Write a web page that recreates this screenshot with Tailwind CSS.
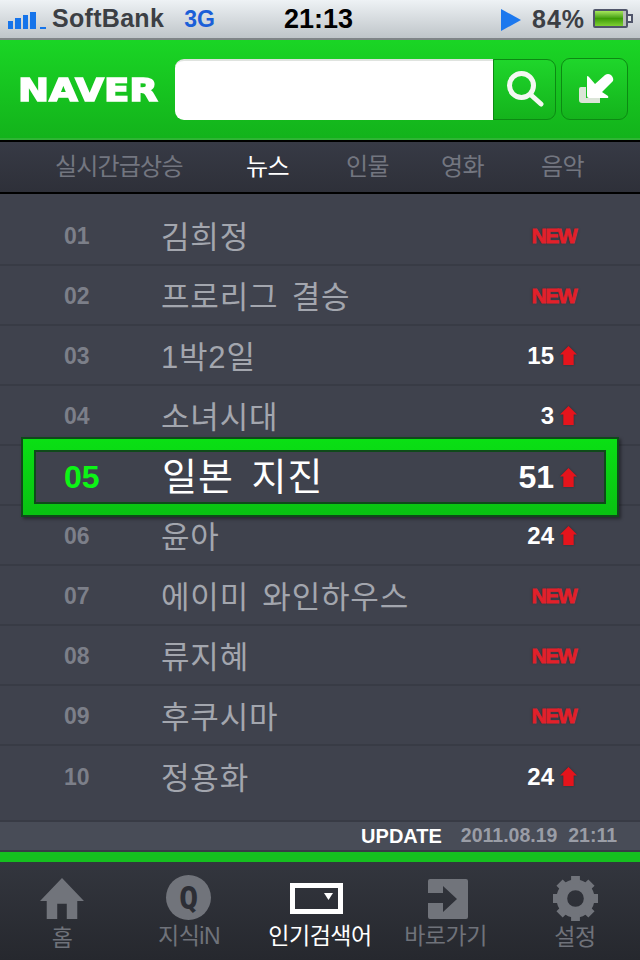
<!DOCTYPE html>
<html lang="ko">
<head>
<meta charset="UTF-8">
<title>NAVER 실시간급상승</title>
<script src="https://cdn.jsdelivr.net/npm/@tailwindcss/browser@4"></script>
</head>
<body class="w-[640px] h-[960px] overflow-hidden bg-[#3f424d] font-['Liberation_Sans','Noto_Sans_CJK_KR',sans-serif]">
<div class="relative w-[640px] h-[960px] flex flex-col">

  <!-- status bar -->
  <div class="h-[40px] shrink-0 flex items-center bg-gradient-to-b from-[#eef2f5] to-[#bfc5c9] border-b-2 border-[#7f8487] text-[#3c3f44] relative">
    <svg class="ml-2 mt-[3px] w-[39px] h-[20px]" viewBox="0 0 39 20"><g fill="#1674ea"><rect y="10" width="5" height="8"/><rect x="7" y="7" width="6" height="11"/><rect x="15" y="4" width="5" height="14"/><rect x="22" y="1" width="6" height="17"/><rect x="32" y="16" width="6" height="2"/></g></svg>
    <span class="ml-[5px] text-[25px] font-bold tracking-[0.3px]">SoftBank</span>
    <span class="ml-[20px] text-[23px] font-bold text-[#1b5fd8]">3G</span>
    <span class="absolute left-[284px] top-[2px] text-[27px] leading-[34px] font-bold text-black">21:13</span>
    <svg class="absolute left-[500px] top-[8px] w-[22px] h-[24px]" viewBox="0 0 22 24"><path d="M1 1 L21 12 L1 23 Z" fill="#1c78ee"/></svg>
    <span class="absolute left-[532px] top-[4px] text-[25px] leading-[30px] font-bold tracking-[1px]">84%</span>
    <div class="absolute left-[593px] top-[9px] flex items-center">
      <div class="w-[35px] h-[19px] border-2 border-[#50556a] bg-[#b9bdb8] rounded-[2px]">
        <div class="w-[28px] h-full bg-gradient-to-b from-[#a6e75a] via-[#3d9c05] to-[#7ed031]"></div>
      </div>
      <div class="w-[5px] h-[9px] bg-[#e6e9ea] border-2 border-l-0 border-[#50556a]"></div>
    </div>
  </div>

  <!-- search header -->
  <div class="h-[100px] shrink-0 flex items-center bg-gradient-to-b from-[#1ad525] to-[#13b31b] border-b-2 border-[#2fb534] pl-[18px]">
    <div class="w-[157px] pt-[3px]"><span class="inline-block origin-left scale-x-[1.16] text-[32px] leading-none font-['DejaVu_Sans'] font-bold text-white [-webkit-text-stroke:1.5px_#fff]">NAVER</span></div>
    <div class="flex h-[61px]">
      <div class="w-[318px] bg-white rounded-l-[9px] border-t-2 border-[#dfe3df]"></div>
      <div class="w-[63px] flex items-center justify-center bg-gradient-to-b from-[#1fd62b] to-[#14b31c] border border-[#0c8a13] rounded-r-[9px]">
        <svg class="w-[38px] h-[38px]" viewBox="0 0 38 38" fill="none" stroke="#f4f8f2" stroke-linecap="round"><circle cx="15.500" cy="15.500" r="12" stroke-width="5"/><path d="M25 25 L35 34" stroke-width="5"/></svg>
      </div>
    </div>
    <div class="ml-[5px] w-[67px] h-[62px] flex items-center justify-center bg-gradient-to-b from-[#1fd62b] to-[#14b31c] border border-[#0c8a13] rounded-[9px]">
      <svg class="ml-[2px] w-[36px] h-[32px]" viewBox="0 0 36 30"><path d="M3 13 H8 V24 H22 V29 H4 Q1 29 1 26 V15 Q1 13 3 13 Z" fill="#dbe5d8"/><path d="M9 3 Q9 1 11 3 L17 10 L27 1 Q30 -1 33 1 Q36 4 35 7 L24 18 L30 22 Q31 24 29 24 H11 Q9 24 9 22 Z" fill="#fff"/></svg>
    </div>
  </div>

  <!-- category tabs -->
  <div class="h-[54px] shrink-0 flex items-center whitespace-nowrap bg-gradient-to-b from-[#373a45] to-[#2e3039] border-y-2 border-black text-[24px] text-[#737680]">
    <span class="ml-[55px] w-[130px] tracking-[-0.8px]">실시간급상승</span>
    <span class="ml-[61px] w-[44px] text-white tracking-[-0.5px]">뉴스</span>
    <span class="ml-[56px] w-[43px] tracking-[-0.5px]">인물</span>
    <span class="ml-[52px] w-[43px] tracking-[-0.5px]">영화</span>
    <span class="ml-[57px] w-[44px] tracking-[-0.5px]">음악</span>
  </div>

  <!-- ranking list -->
  <div class="flex-1 pt-[12px] bg-[#3f424d] [word-spacing:4px]">
    <div class="h-[60px] flex items-center border-b-2 border-[#383b45]"><span class="ml-[64px] pt-[2px] w-[97px] text-[23px] font-bold text-[#7c7f89]">01</span><span class="flex-1 pt-[6px] text-[31px] text-[#a3a6ae] tracking-[0.8px]">김희정</span><span class="mr-[64px] pt-[2px] text-[21px] font-bold tracking-[-1.5px] text-[#e2202a] [-webkit-text-stroke:0.8px_#e2202a] [text-shadow:0_0_3px_#2a2c33]">NEW</span></div>
    <div class="h-[60px] flex items-center border-b-2 border-[#383b45]"><span class="ml-[64px] pt-[2px] w-[97px] text-[23px] font-bold text-[#7c7f89]">02</span><span class="flex-1 pt-[6px] text-[31px] text-[#a3a6ae] tracking-[0.8px]">프로리그 결승</span><span class="mr-[64px] pt-[2px] text-[21px] font-bold tracking-[-1.5px] text-[#e2202a] [-webkit-text-stroke:0.8px_#e2202a] [text-shadow:0_0_3px_#2a2c33]">NEW</span></div>
    <div class="h-[60px] flex items-center border-b-2 border-[#383b45]"><span class="ml-[64px] pt-[2px] w-[97px] text-[23px] font-bold text-[#7c7f89]">03</span><span class="flex-1 pt-[6px] text-[31px] text-[#a3a6ae] tracking-[0.8px]">1박2일</span><span class="pt-[2px] text-[24px] font-bold text-white">15</span><svg class="ml-[6px] mr-[63px] w-[17px] h-[19px] drop-shadow-[0_0_1px_#2a2c33]" viewBox="0 0 18 20"><path d="M9 0 L18 9 H14.500 V20 H3.500 V9 H0 Z" fill="#e5141c"/></svg></div>
    <div class="h-[60px] flex items-center border-b-2 border-[#383b45]"><span class="ml-[64px] pt-[2px] w-[97px] text-[23px] font-bold text-[#7c7f89]">04</span><span class="flex-1 pt-[6px] text-[31px] text-[#a3a6ae] tracking-[0.8px]">소녀시대</span><span class="pt-[2px] text-[24px] font-bold text-white">3</span><svg class="ml-[6px] mr-[63px] w-[17px] h-[19px] drop-shadow-[0_0_1px_#2a2c33]" viewBox="0 0 18 20"><path d="M9 0 L18 9 H14.500 V20 H3.500 V9 H0 Z" fill="#e5141c"/></svg></div>
    <div class="h-[60px] border-b-2 border-[#383b45]"></div>
    <div class="h-[60px] flex items-center border-b-2 border-[#383b45]"><span class="ml-[64px] pt-[2px] w-[97px] text-[23px] font-bold text-[#7c7f89]">06</span><span class="flex-1 pt-[6px] text-[31px] text-[#a3a6ae] tracking-[0.8px]">윤아</span><span class="pt-[2px] text-[24px] font-bold text-white">24</span><svg class="ml-[6px] mr-[63px] w-[17px] h-[19px] drop-shadow-[0_0_1px_#2a2c33]" viewBox="0 0 18 20"><path d="M9 0 L18 9 H14.500 V20 H3.500 V9 H0 Z" fill="#e5141c"/></svg></div>
    <div class="h-[60px] flex items-center border-b-2 border-[#383b45]"><span class="ml-[64px] pt-[2px] w-[97px] text-[23px] font-bold text-[#7c7f89]">07</span><span class="flex-1 pt-[6px] text-[31px] text-[#a3a6ae] tracking-[0.8px]">에이미 와인하우스</span><span class="mr-[64px] pt-[2px] text-[21px] font-bold tracking-[-1.5px] text-[#e2202a] [-webkit-text-stroke:0.8px_#e2202a] [text-shadow:0_0_3px_#2a2c33]">NEW</span></div>
    <div class="h-[60px] flex items-center border-b-2 border-[#383b45]"><span class="ml-[64px] pt-[2px] w-[97px] text-[23px] font-bold text-[#7c7f89]">08</span><span class="flex-1 pt-[6px] text-[31px] text-[#a3a6ae] tracking-[0.8px]">류지혜</span><span class="mr-[64px] pt-[2px] text-[21px] font-bold tracking-[-1.5px] text-[#e2202a] [-webkit-text-stroke:0.8px_#e2202a] [text-shadow:0_0_3px_#2a2c33]">NEW</span></div>
    <div class="h-[60px] flex items-center border-b-2 border-[#383b45]"><span class="ml-[64px] pt-[2px] w-[97px] text-[23px] font-bold text-[#7c7f89]">09</span><span class="flex-1 pt-[6px] text-[31px] text-[#a3a6ae] tracking-[0.8px]">후쿠시마</span><span class="mr-[64px] pt-[2px] text-[21px] font-bold tracking-[-1.5px] text-[#e2202a] [-webkit-text-stroke:0.8px_#e2202a] [text-shadow:0_0_3px_#2a2c33]">NEW</span></div>
    <div class="h-[60px] flex items-center"><span class="ml-[64px] pt-[2px] w-[97px] text-[23px] font-bold text-[#7c7f89]">10</span><span class="flex-1 pt-[6px] text-[31px] text-[#a3a6ae] tracking-[0.8px]">정용화</span><span class="pt-[2px] text-[24px] font-bold text-white">24</span><svg class="ml-[6px] mr-[63px] w-[17px] h-[19px] drop-shadow-[0_0_1px_#2a2c33]" viewBox="0 0 18 20"><path d="M9 0 L18 9 H14.500 V20 H3.500 V9 H0 Z" fill="#e5141c"/></svg></div>
  </div>

  <!-- update bar -->
  <div class="h-[32px] shrink-0 flex items-center justify-end pr-[23px] bg-[#484c57] border-y-2 border-[#383b45]">
    <span class="text-[20px] font-bold text-white">UPDATE</span>
    <span class="ml-[19px] text-[19.500px] font-bold text-[#9a9da6]">2011.08.19&nbsp;&nbsp;21:11</span>
  </div>
  <div class="h-[10px] shrink-0 bg-[#15c01f]"></div>

  <!-- bottom tabs -->
  <div class="h-[98px] shrink-0 grid grid-cols-5 bg-gradient-to-b from-[#33363e] to-[#26282e] text-[23px] text-[#6f727a] text-center tracking-[-0.5px] leading-none whitespace-nowrap">
    <div class="flex flex-col items-center pt-[16px]">
      <svg class="mr-[4px] w-[48px] h-[42px]" viewBox="0 0 48 44"><path d="M24 0 L47 24 H40 V43 H29 V27 H19 V43 H8 V24 H1 Z" fill="#71747b"/></svg>
      <span class="mr-[4px] mt-[7px]">홈</span>
    </div>
    <div class="flex flex-col items-center pt-[13px]">
      <div class="mr-[7px] w-[45px] h-[45px] rounded-full bg-[#71747b] flex items-center justify-center font-['DejaVu_Sans_Mono'] font-bold text-[32px] text-[#2c2e35]">Q</div>
      <span class="mr-[6px] mt-[5px]">지식iN</span>
    </div>
    <div class="flex flex-col items-center pt-[21px] text-white">
      <div class="relative mr-[8px] w-[53px] h-[31px] border-[5px] border-white"><svg class="absolute right-[5px] top-[5px] w-[9px] h-[7px]" viewBox="0 0 9 7"><path d="M0 0 H9 L4.500 7 Z" fill="#fff"/></svg></div>
      <span class="mt-[11px]">인기검색어</span>
    </div>
    <div class="flex flex-col items-center pt-[17px]">
      <svg class="w-[40px] h-[40px]" viewBox="0 0 40 40"><path d="M2 0 H38 Q40 0 40 2 V38 Q40 40 38 40 H2 Q0 40 0 38 V24 H15 V33 L29 20 L15 7 V14 H0 V2 Q0 0 2 0 Z" fill="#71747b"/></svg>
      <span class="mr-[5px] mt-[6px]">바로가기</span>
    </div>
    <div class="flex flex-col items-center pt-[14px]">
      <svg class="mr-[2px] w-[45px] h-[45px]" viewBox="0 0 46 46"><circle cx="23" cy="23" r="14" fill="none" stroke="#71747b" stroke-width="11"/><g stroke="#71747b" stroke-width="9"><path d="M23 0 V8 M23 38 V46 M0 23 H8 M38 23 H46 M6.700 6.700 L12.400 12.400 M33.600 33.600 L39.300 39.300 M6.700 39.300 L12.400 33.600 M33.600 12.400 L39.300 6.700"/></g></svg>
      <span class="mr-[2px] mt-[5px]">설정</span>
    </div>
  </div>

  <!-- highlighted rank overlay -->
  <div class="absolute left-[21px] top-[437px] w-[598px] h-[80px] bg-gradient-to-b from-[#0ae014] to-[#09c212] border-2 border-[#0f4a1a] shadow-[2px_2px_3px_rgba(0,0,0,0.4)] p-[11px]">
    <div class="h-full flex items-center whitespace-nowrap bg-[#3f424d] border-2 border-[#0f4a1a] [word-spacing:6px]">
      <span class="ml-[28px] w-[98px] text-[32px] font-bold text-[#0cf515]">05</span>
      <span class="flex-1 text-[38px] text-white tracking-[1px]">일본 지진</span>
      <span class="text-[32px] font-bold text-white">51</span>
      <svg class="ml-[6px] mr-[27px] w-[17px] h-[19px] drop-shadow-[0_0_1px_#2a2c33]" viewBox="0 0 18 20"><path d="M9 0 L18 9 H14.500 V20 H3.500 V9 H0 Z" fill="#e5141c"/></svg>
    </div>
  </div>
</div>
</body>
</html>
